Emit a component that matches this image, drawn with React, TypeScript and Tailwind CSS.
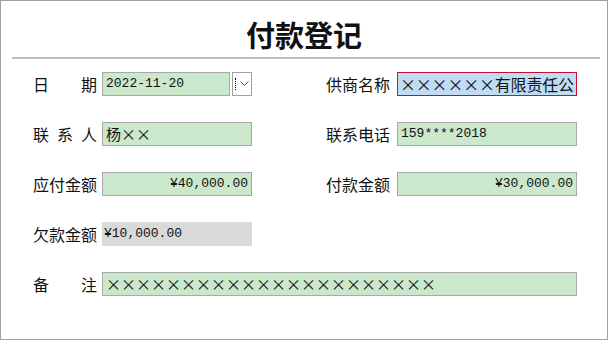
const cjk = "font-['Noto_Sans_CJK_SC','Noto_Sans',sans-serif]";
const mono = "font-['Liberation_Mono','Noto_Sans_CJK_SC',monospace]";

function Label({ chars }: { chars: string[] }) {
  return (
    <div className={`flex w-[64px] shrink-0 justify-between text-[16px] leading-none text-[#111] ${cjk}`}>
      {chars.map((c, i) => (
        <span key={i}>{c}</span>
      ))}
    </div>
  );
}

function Field({
  children,
  className = "",
}: {
  children: React.ReactNode;
  className?: string;
}) {
  return (
    <div
      className={`flex h-[24px] shrink-0 items-center overflow-hidden whitespace-nowrap border border-[#a8a8a8] bg-[#cce8cc] px-[3px] text-[13px] text-[#111] ${className}`}
    >
      {children}
    </div>
  );
}

export default function App() {
  return (
    <div className="h-[340px] w-[608px] border border-[#a0a0a0] bg-white">
      <div className="flex h-[55px] items-end justify-center pb-[7px]">
        <h1 className={`text-[29px] font-bold leading-none text-[#111] ${cjk}`}>
          付款登记
        </h1>
      </div>
      <div className="ml-[11px] mr-[7px] mt-[1px] h-[2px] bg-[#bdbdbd]" />

      <div className="flex flex-col gap-[26px] pl-[32px] pt-[13px]">
        {/* row 1 */}
        <div className="flex items-center">
          <Label chars={["日", "期"]} />
          <div className="ml-[5px] flex w-[150px] shrink-0 gap-[2px]">
            <Field className={`w-[128px] ${mono}`}>2022-11-20</Field>
            <div className="flex h-[24px] w-[21px] items-center border border-[#a0a0a0] bg-white">
              <span className="ml-[2px] h-[12px] border-l border-dotted border-black" />
              <svg className="ml-[4px]" width="9" height="6" viewBox="0 0 9 6">
                <polyline points="0.5,0.5 4.5,4.5 8.5,0.5" fill="none" stroke="#555" strokeWidth="1" />
              </svg>
            </div>
          </div>
          <div className="ml-[74px]">
            <Label chars={["供", "商", "名", "称"]} />
          </div>
          <div
            className={`ml-[7px] flex h-[24px] w-[180px] shrink-0 items-center overflow-hidden whitespace-nowrap border border-[#c8102e] bg-[#c0dcf5] px-[2px] text-[16px] tracking-[-0.2px] text-[#111] ${cjk}`}
          >
            ××××××有限责任公
          </div>
        </div>

        {/* row 2 */}
        <div className="flex items-center">
          <Label chars={["联", "系", "人"]} />
          <Field className={`ml-[5px] w-[150px] text-[15px] ${cjk}`}>杨××</Field>
          <div className="ml-[74px]">
            <Label chars={["联", "系", "电", "话"]} />
          </div>
          <Field className={`ml-[7px] w-[180px] ${mono}`}>159****2018</Field>
        </div>

        {/* row 3 */}
        <div className="flex items-center">
          <Label chars={["应", "付", "金", "额"]} />
          <Field className={`ml-[5px] w-[150px] justify-end ${mono}`}>¥40,000.00</Field>
          <div className="ml-[74px]">
            <Label chars={["付", "款", "金", "额"]} />
          </div>
          <Field className={`ml-[7px] w-[180px] justify-end ${mono}`}>¥30,000.00</Field>
        </div>

        {/* row 4 */}
        <div className="flex items-center">
          <Label chars={["欠", "款", "金", "额"]} />
          <div
            className={`ml-[5px] flex h-[24px] w-[150px] items-center bg-[#d9d9d9] px-[2px] text-[13px] text-[#111] ${mono}`}
          >
            ¥10,000.00
          </div>
        </div>

        {/* row 5 */}
        <div className="flex items-center">
          <Label chars={["备", "注"]} />
          <Field className={`ml-[5px] w-[475px] text-[15px] ${cjk}`}>
            ××××××××××××××××××××××
          </Field>
        </div>
      </div>
    </div>
  );
}
